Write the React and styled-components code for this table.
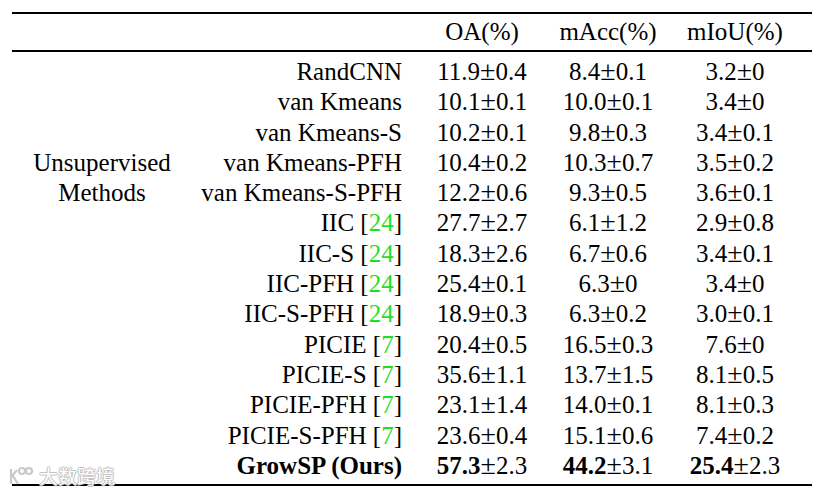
import React from "react";
import styled, { createGlobalStyle } from "styled-components";

const rows = [
  { name: "RandCNN", oa: ["11.9", "0.4"], macc: ["8.4", "0.1"], miou: ["3.2", "0"] },
  { name: "van Kmeans", oa: ["10.1", "0.1"], macc: ["10.0", "0.1"], miou: ["3.4", "0"] },
  { name: "van Kmeans-S", oa: ["10.2", "0.1"], macc: ["9.8", "0.3"], miou: ["3.4", "0.1"] },
  { name: "van Kmeans-PFH", oa: ["10.4", "0.2"], macc: ["10.3", "0.7"], miou: ["3.5", "0.2"] },
  { name: "van Kmeans-S-PFH", oa: ["12.2", "0.6"], macc: ["9.3", "0.5"], miou: ["3.6", "0.1"] },
  { name: "IIC", cite: "24", oa: ["27.7", "2.7"], macc: ["6.1", "1.2"], miou: ["2.9", "0.8"] },
  { name: "IIC-S", cite: "24", oa: ["18.3", "2.6"], macc: ["6.7", "0.6"], miou: ["3.4", "0.1"] },
  { name: "IIC-PFH", cite: "24", oa: ["25.4", "0.1"], macc: ["6.3", "0"], miou: ["3.4", "0"] },
  { name: "IIC-S-PFH", cite: "24", oa: ["18.9", "0.3"], macc: ["6.3", "0.2"], miou: ["3.0", "0.1"] },
  { name: "PICIE", cite: "7", oa: ["20.4", "0.5"], macc: ["16.5", "0.3"], miou: ["7.6", "0"] },
  { name: "PICIE-S", cite: "7", oa: ["35.6", "1.1"], macc: ["13.7", "1.5"], miou: ["8.1", "0.5"] },
  { name: "PICIE-PFH", cite: "7", oa: ["23.1", "1.4"], macc: ["14.0", "0.1"], miou: ["8.1", "0.3"] },
  { name: "PICIE-S-PFH", cite: "7", oa: ["23.6", "0.4"], macc: ["15.1", "0.6"], miou: ["7.4", "0.2"] },
  { name: "GrowSP (Ours)", ours: true, oa: ["57.3", "2.3"], macc: ["44.2", "3.1"], miou: ["25.4", "2.3"] },
];

function Score({ value, bold }) {
  return (
    <>
      {bold ? <b>{value[0]}</b> : value[0]}
      <Pm>±</Pm>
      {value[1]}
    </>
  );
}

function App() {
  return (
    <Page>
      <GlobalStyle />
      <Table>
        <HeaderRow>
          <Cell $col={3}>OA(%)</Cell>
          <Cell $col={4}>mAcc(%)</Cell>
          <Cell $col={5}>mIoU(%)</Cell>
        </HeaderRow>
        <Body>
          <GroupCell>
            Unsupervised
            <br />
            Methods
          </GroupCell>
          {rows.map((r, i) => (
            <React.Fragment key={r.name}>
              <MethodCell $row={i + 1} $bold={r.ours}>
                {r.name}
                {r.cite && (
                  <>
                    {" "}[<Cite>{r.cite}</Cite>]
                  </>
                )}
              </MethodCell>
              <Cell $col={3} $row={i + 1}>
                <Score value={r.oa} bold={r.ours} />
              </Cell>
              <Cell $col={4} $row={i + 1}>
                <Score value={r.macc} bold={r.ours} />
              </Cell>
              <Cell $col={5} $row={i + 1}>
                <Score value={r.miou} bold={r.ours} />
              </Cell>
            </React.Fragment>
          ))}
        </Body>
      </Table>
      <Watermark>
        <svg width="28" height="22" viewBox="0 0 28 22">
          <g fill="none" stroke="#c4c4c4" strokeWidth="2.2">
            <path d="M3 4 L3 19 M3 12 L9 5 M5 11 L10 19" />
            <circle cx="14" cy="6" r="3" />
            <circle cx="21" cy="6" r="3" />
          </g>
        </svg>
        <span>大数跨境</span>
      </Watermark>
    </Page>
  );
}

export default App;

const GlobalStyle = createGlobalStyle`
  html, body {
    margin: 0;
    background: #fff;
  }
`;

const Page = styled.div`
  position: relative;
  width: 814px;
  height: 494px;
  padding-top: 12px;
  box-sizing: border-box;
  font-family: "Liberation Serif", "Times New Roman", serif;
  font-size: 25px;
  color: #000;
`;

const Table = styled.div`
  margin-left: 12px;
  width: 800px;
  border-top: 2px solid #000;
  border-bottom: 2px solid #000;
`;

const columns = "180px 220px 140px 112px 148px";

const HeaderRow = styled.div`
  display: grid;
  grid-template-columns: ${columns};
  align-items: center;
  height: 36px;
  border-bottom: 2px solid #000;
`;

const Body = styled.div`
  display: grid;
  grid-template-columns: ${columns};
  grid-template-rows: repeat(14, 30.3px);
  align-items: center;
  padding: 5px 0 3px;
`;

const Cell = styled.div`
  grid-column: ${(p) => p.$col};
  grid-row: ${(p) => p.$row || "auto"};
  text-align: center;
  white-space: nowrap;
  line-height: 30.3px;
  padding-right: ${(p) => (p.$col === 5 ? "6px" : "0")};
`;

const Pm = styled.span`
  font-size: 1.12em;
  line-height: 1;
`;

const GroupCell = styled.div`
  grid-column: 1;
  grid-row: 4 / span 2;
  text-align: center;
  line-height: 30.3px;
`;

const MethodCell = styled.div`
  grid-column: 2;
  grid-row: ${(p) => p.$row};
  text-align: right;
  padding-right: 10px;
  white-space: nowrap;
  line-height: 30.3px;
  font-weight: ${(p) => (p.$bold ? 700 : 400)};
`;

const Cite = styled.span`
  color: #1fe01f;
`;

const Watermark = styled.div`
  position: absolute;
  left: 8px;
  top: 462px;
  display: flex;
  align-items: center;
  gap: 3px;
  font-family: "Noto Sans CJK SC", sans-serif;
  font-size: 19px;
  color: #fff;
  opacity: 0.9;
  text-shadow: -1px 0 #bbb, 1px 0 #bbb, 0 -1px #bbb, 0 1px #bbb;
`;
